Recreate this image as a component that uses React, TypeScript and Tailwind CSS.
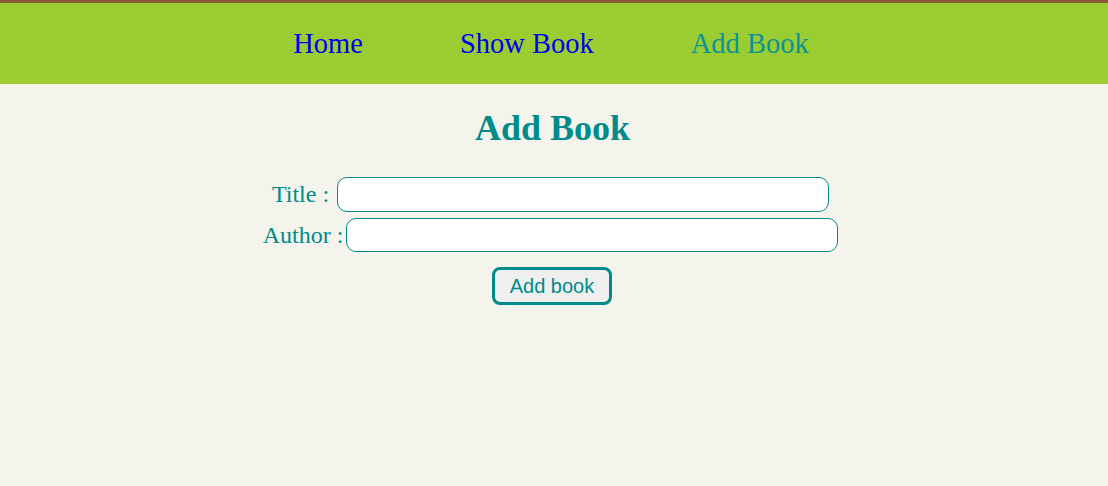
import React from "react";

export default function App() {
  return (
    <div className="min-h-[486px] bg-[#f4f3ec] font-['Liberation_Serif',serif]">
      <nav className="flex h-[84px] items-center justify-center gap-[97px] border-t-[3px] border-[#87593c] bg-[#9acd32] pt-[2px] pr-[6px] text-[28.5px]">
        <a href="#" className="text-[#0000ee]">Home</a>
        <a href="#" className="text-[#0000ee]">Show Book</a>
        <a href="#" className="text-[#0c9393]">Add Book</a>
      </nav>
      <div className="flex flex-col items-center pr-[7px] text-[#008b8b]">
        <h1 className="mt-[22px] ml-[4px] text-[36px] leading-[44px] font-bold">Add Book</h1>
        <form className="mt-[26px] flex flex-col items-center" onSubmit={(e) => e.preventDefault()}>
          <div className="flex items-center">
            <label className="mr-[8px] text-[24px]">Title :</label>
            <input className="h-[35px] w-[492px] rounded-[10px] border border-[#008b8b] bg-white outline-none" />
          </div>
          <div className="mt-[5px] flex items-center">
            <label className="mr-[3px] text-[24px]">Author :</label>
            <input className="h-[34px] w-[492px] rounded-[10px] border border-[#008b8b] bg-white outline-none" />
          </div>
          <button className="mt-[14px] ml-[3px] h-[38px] w-[120px] rounded-[8px] border-[3px] border-[#008b8b] bg-[#efefef] font-['Liberation_Sans',sans-serif] text-[20px] text-[#008b8b]">
            Add book
          </button>
        </form>
      </div>
    </div>
  );
}
